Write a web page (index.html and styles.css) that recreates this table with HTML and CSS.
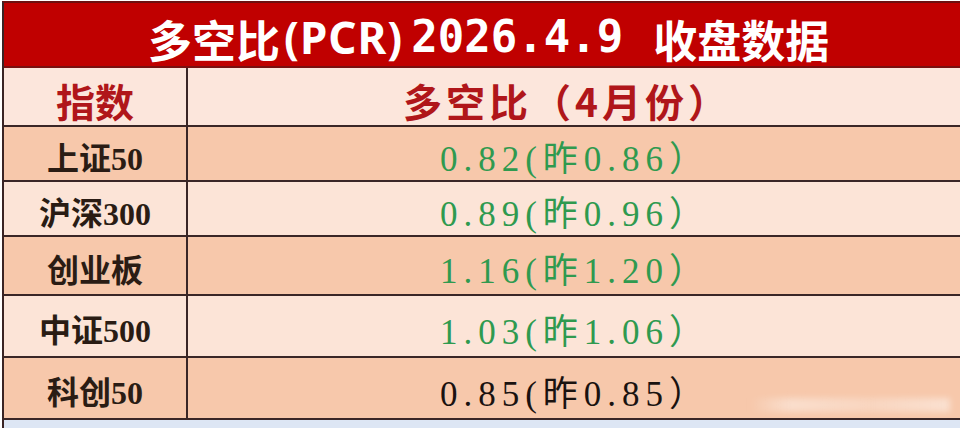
FILE: index.html
```html
<!DOCTYPE html>
<html lang="zh-CN">
<head>
<meta charset="utf-8">
<link rel="stylesheet" href="styles.css">
</head>
<body>
<div class="sheet">
  <div class="title"><span class="t-cjk">多空比</span><span class="t-lat">(PCR)</span><span class="t-num">2026.4.9</span><span class="t-cjk t-gap">收盘数据</span></div>
  <div class="grid">
    <div class="cell head name">指数</div>
    <div class="cell head val">多空比（4月份）</div>

    <div class="cell dark name">上证50</div>
    <div class="cell dark val green">0.82(昨0.86）</div>

    <div class="cell light name">沪深300</div>
    <div class="cell light val green">0.89(昨0.96）</div>

    <div class="cell dark name r3">创业板</div>
    <div class="cell dark val green r3">1.16(昨1.20）</div>

    <div class="cell light name r4">中证500</div>
    <div class="cell light val green r4">1.03(昨1.06）</div>

    <div class="cell dark name r4">科创50</div>
    <div class="cell dark val black r4">0.85(昨0.85）<span class="mark"></span></div>
  </div>
  <div class="footer"></div>
</div>
</body>
</html>
```

FILE: styles.css
```css
html, body {
  margin: 0;
  padding: 0;
  background: #ffffff;
  overflow: hidden;
}

.sheet {
  margin: 1px 0 0 2px;
  border-top: 2px solid #6e1010;
  border-left: 2px solid #3a2424;
  width: 980px;
}

.title {
  height: 65px;
  background: #c00000;
  border-bottom: 2px solid #7a1010;
  color: #ffffff;
  font-family: "Noto Sans CJK SC", "Noto Sans", sans-serif;
  font-weight: 700;
  font-size: 44px;
  line-height: 1;
  display: flex;
  align-items: flex-end;
  padding-left: 144px;
  padding-bottom: 5px;
  box-sizing: border-box;
  white-space: nowrap;
}

.t-lat {
  font-family: "Noto Sans", sans-serif;
  margin: 0 2px 0 4px;
  letter-spacing: 1px;
  transform: translateY(-2px);
}

.t-num {
  font-family: "DejaVu Sans Mono", monospace;
  font-weight: 700;
  margin-left: 6px;
  transform: translateY(-2px);
}

.t-gap {
  margin-left: 30px;
}

.grid {
  display: grid;
  grid-template-columns: 184px 1fr;
  width: 958px;
}

.cell {
  display: flex;
  align-items: center;
  justify-content: center;
  border-bottom: 2px solid #3a2626;
  height: 55px;
  box-sizing: border-box;
  white-space: nowrap;
  position: relative;
}

.cell.name {
  border-right: 2px solid #3a2626;
}

.cell.head {
  height: 59px;
  background: #fce6dc;
  color: #b0161a;
  font-family: "Noto Sans CJK SC", sans-serif;
  font-weight: 700;
  font-size: 39px;
  padding-top: 6px;
}

.cell.head.val {
  padding-right: 16px;
  letter-spacing: 4px;
}

.cell.r3 { height: 59px; }
.cell.r4 { height: 62px; }

.dark { background: #f7c8ab; }
.light { background: #fce4d7; }

.cell.name:not(.head) {
  font-family: "Liberation Serif", "Noto Sans CJK SC", serif;
  font-weight: 600;
  font-size: 32px;
  color: #2a1c14;
  padding-top: 4px;
}

.cell.val:not(.head) {
  font-family: "Liberation Serif", "Noto Sans CJK SC", serif;
  font-size: 35px;
  letter-spacing: 6px;
  padding-right: 0;
  padding-top: 4px;
}

.green { color: #2f9a4f; }
.black { color: #1a1210; }

.mark {
  position: absolute;
  right: 12px;
  bottom: 6px;
  width: 200px;
  height: 14px;
  background: linear-gradient(90deg, rgba(255,255,255,0.0), rgba(255,255,255,0.4) 20%, rgba(255,255,255,0.25) 60%, rgba(255,255,255,0.45));
  filter: blur(3px);
}

.footer {
  height: 20px;
  background: #dde6f4;
}
```
